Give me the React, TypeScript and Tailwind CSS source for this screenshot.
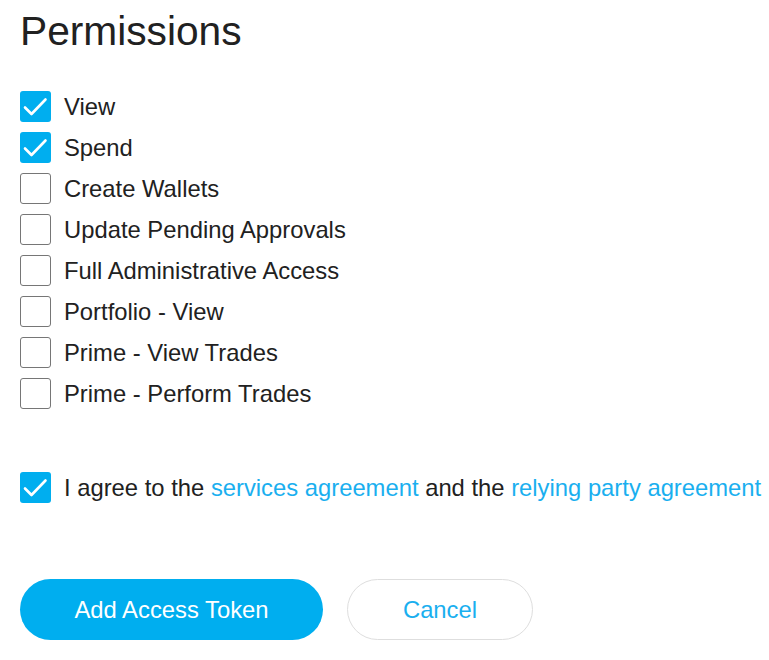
import { useState } from "react";

const PERMISSIONS = [
  { id: "view", label: "View", checked: true },
  { id: "spend", label: "Spend", checked: true },
  { id: "create", label: "Create Wallets", checked: false },
  { id: "approvals", label: "Update Pending Approvals", checked: false },
  { id: "admin", label: "Full Administrative Access", checked: false },
  { id: "portfolio", label: "Portfolio - View", checked: false },
  { id: "prime-view", label: "Prime - View Trades", checked: false },
  { id: "prime-trade", label: "Prime - Perform Trades", checked: false },
];

type BoxProps = {
  checked: boolean;
  onToggle: () => void;
};

const Box = ({ checked, onToggle }: BoxProps) => (
  <button
    type="button"
    onClick={onToggle}
    className={
      checked
        ? "flex h-[31px] w-[31px] shrink-0 items-center justify-center rounded-[3px] bg-[#00aeef]"
        : "flex h-[31px] w-[31px] shrink-0 items-center justify-center rounded-[3px] border border-[#767676] bg-white"
    }
  >
    {checked && (
      <svg width="31" height="31" viewBox="0 0 31 31" fill="none">
        <path
          d="M5 16.5 L11.5 23 L25.5 8.5"
          stroke="white"
          strokeWidth="2.6"
          strokeLinecap="round"
          strokeLinejoin="round"
        />
      </svg>
    )}
  </button>
);

const App = () => {
  const [perms, setPerms] = useState(PERMISSIONS);
  const [agreed, setAgreed] = useState(true);

  const toggle = (id: string) =>
    setPerms((list) =>
      list.map((p) => (p.id === id ? { ...p, checked: !p.checked } : p)),
    );

  return (
    <div className="min-h-[660px] bg-white px-5 pt-[7px] font-['Liberation_Sans',Arial,sans-serif] text-[#212121]">
      <h1 className="text-[40.7px] leading-[48px]">Permissions</h1>

      <div className="mt-[36px] flex flex-col gap-[10px]">
        {perms.map((p) => (
          <label key={p.id} className="flex items-center gap-[13px] text-[23.8px] leading-[31px]">
            <Box checked={p.checked} onToggle={() => toggle(p.id)} />
            <span>{p.label}</span>
          </label>
        ))}
      </div>

      <div className="mt-[63px] flex items-center gap-[13px] whitespace-nowrap text-[23.8px] leading-[31px]">
        <Box checked={agreed} onToggle={() => setAgreed(!agreed)} />
        <span>
          I agree to the{" "}
          <a className="text-[#1aafef]">services agreement</a> and the{" "}
          <a className="text-[#1aafef]">relying party agreement</a>
        </span>
      </div>

      <div className="mt-[76px] flex gap-6">
        <button
          type="button"
          className="h-[61px] w-[303px] rounded-full bg-[#00aeef] text-[23.8px] text-white"
        >
          Add Access Token
        </button>
        <button
          type="button"
          className="h-[61px] w-[186px] rounded-full border border-[#dedede] bg-white text-[23.8px] text-[#1aafef]"
        >
          Cancel
        </button>
      </div>
    </div>
  );
};

export default App;
